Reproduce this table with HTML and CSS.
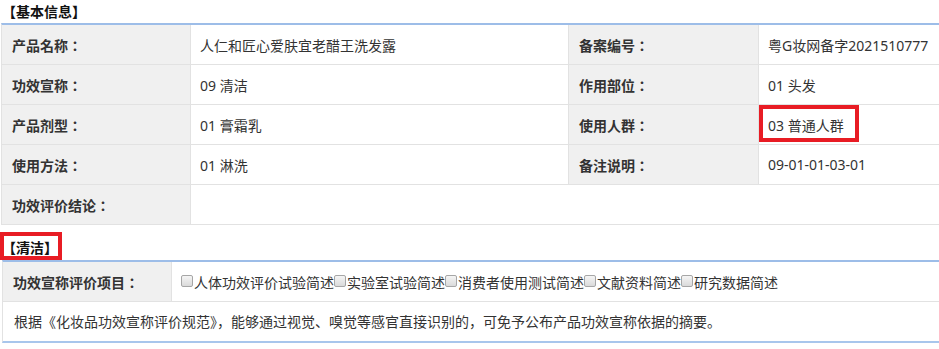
FILE: index.html
```html
<!DOCTYPE html>
<html lang="zh-CN">
<head>
<meta charset="utf-8">
<title>基本信息</title>
<link rel="stylesheet" href="styles.css">
</head>
<body>
<div class="section-title">【基本信息】</div>
<div class="info-grid">
  <div class="cell label">产品名称：</div>
  <div class="cell value">人仁和匠心爱肤宜老醋王洗发露</div>
  <div class="cell label">备案编号：</div>
  <div class="cell value">粤G妆网备字2021510777</div>

  <div class="cell label">功效宣称：</div>
  <div class="cell value">09 清洁</div>
  <div class="cell label">作用部位：</div>
  <div class="cell value">01 头发</div>

  <div class="cell label">产品剂型：</div>
  <div class="cell value">01 膏霜乳</div>
  <div class="cell label">使用人群：</div>
  <div class="cell value marked">03 普通人群<span class="mark mark--cell"></span></div>

  <div class="cell label">使用方法：</div>
  <div class="cell value">01 淋洗</div>
  <div class="cell label">备注说明：</div>
  <div class="cell value">09-01-01-03-01</div>

  <div class="cell label">功效评价结论：</div>
  <div class="cell value span-rest"></div>
</div>

<div class="section-title section-title--sub">【清洁】<span class="mark mark--title"></span></div>
<div class="claim-table">
  <div class="claim-row">
    <div class="cell label claim-label">功效宣称评价项目：</div>
    <div class="cell checks"><input type="checkbox" class="chk" disabled>人体功效评价试验简述<input type="checkbox" class="chk" disabled>实验室试验简述<input type="checkbox" class="chk" disabled>消费者使用测试简述<input type="checkbox" class="chk" disabled>文献资料简述<input type="checkbox" class="chk" disabled>研究数据简述</div>
  </div>
  <div class="claim-note">根据《化妆品功效宣称评价规范》，能够通过视觉、嗅觉等感官直接识别的，可免予公布产品功效宣称依据的摘要。</div>
</div>
</body>
</html>
```

FILE: styles.css
```css
* {
  box-sizing: border-box;
}

html, body {
  margin: 0;
  padding: 0;
  background: #ffffff;
}

body {
  font-family: "Noto Sans CJK SC", "Noto Sans", sans-serif;
  font-size: 14px;
  color: #333333;
  width: 939px;
}

.section-title {
  height: 23px;
  line-height: 23px;
  padding-left: 2px;
  font-family: "Noto Sans CJK TC", "Noto Sans CJK SC", sans-serif;
  font-feature-settings: "locl" 0;
  font-weight: bold;
  color: #111111;
  font-size: 14px;
}

.section-title--sub {
  position: relative;
  height: 35px;
  padding-top: 13px;
  line-height: 19px;
}

.mark {
  position: absolute;
  border: 4px solid #e81c24;
  pointer-events: none;
}

.mark--title {
  left: 0;
  top: 7px;
  width: 62px;
  height: 28px;
}

.mark--cell {
  left: 0;
  top: 0;
  width: 100px;
  height: 37px;
}

.info-grid {
  margin-left: 1px;
  display: grid;
  grid-template-columns: 189px 378px 190px 1fr;
  border-top: 2px solid #9dbde8;
  border-left: 1px solid #e2e2e2;
}

.cell {
  height: 40px;
  display: flex;
  align-items: center;
  border-right: 1px solid #e2e2e2;
  border-bottom: 1px solid #e2e2e2;
  white-space: nowrap;
}

.label {
  font-family: "Noto Sans CJK TC", "Noto Sans CJK SC", sans-serif;
  font-feature-settings: "locl" 0;
  background: #f0f0f0;
  font-weight: bold;
  color: #333333;
  padding-left: 10px;
}

.value {
  font-family: "Noto Sans", "Noto Sans CJK SC", sans-serif;
  background: #ffffff;
  padding-left: 9px;
  color: #333333;
}

.info-grid .cell:nth-child(4n) {
  border-right: none;
}

.marked {
  position: relative;
}

.span-rest {
  grid-column: 2 / 5;
  border-right: none;
}

.claim-table {
  margin-left: 2px;
  border-top: 2px solid #9dbde8;
  border-bottom: 2px solid #a8c6ec;
  border-left: 1px solid #e2e2e2;
}

.claim-row {
  display: flex;
}

.claim-label {
  width: 169px;
  flex: none;
  padding-left: 10px;
}

.checks {
  flex: 1;
  padding-left: 9px;
  border-right: none;
  color: #333333;
}

.chk {
  appearance: none;
  -webkit-appearance: none;
  width: 12px;
  height: 12px;
  margin: 0 1px 0 0;
  border: 1px solid #a6a6a6;
  border-radius: 2px;
  background: linear-gradient(#f5f5f5, #dadada);
  flex: none;
  position: relative;
  top: -1px;
}

.claim-note {
  height: 39px;
  line-height: 39px;
  padding-left: 11px;
  color: #333333;
  white-space: nowrap;
}
```
